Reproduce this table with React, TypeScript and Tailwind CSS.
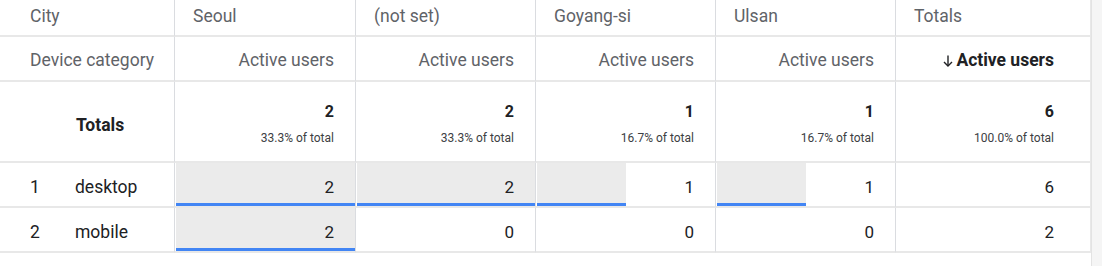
const cities = ["Seoul", "(not set)", "Goyang-si", "Ulsan"];

const totals = [
  { value: 2, pct: "33.3% of total" },
  { value: 2, pct: "33.3% of total" },
  { value: 1, pct: "16.7% of total" },
  { value: 1, pct: "16.7% of total" },
];

const rows = [
  { rank: 1, device: "desktop", values: [2, 2, 1, 1], total: 6 },
  { rank: 2, device: "mobile", values: [2, 0, 0, 0], total: 2 },
];

const max = 2;

const colW = ["w-[181px]", "w-[180px]", "w-[180px]", "w-[180px]"];

function Cell({ className = "", children }: { className?: string; children?: React.ReactNode }) {
  return (
    <div className={`border-r border-b-2 border-r-[#dadce0] border-b-[#e8e8e8] ${className}`}>
      {children}
    </div>
  );
}

function BarCell({ value, width }: { value: number; width: string }) {
  const pct = (value / max) * 100;
  return (
    <Cell className={`${width} relative h-[45px]`}>
      {value > 0 && (
        <div
          className="absolute left-px top-0 bottom-0 bg-[#ebebeb] border-b-[3px] border-[#4285f4]"
          style={{ width: `calc(${pct}% - 1px)` }}
        />
      )}
      <div className="relative flex h-full items-center justify-end pr-[21px] pt-[6px] text-[17px] text-[#202124]">
        {value}
      </div>
    </Cell>
  );
}

function SortArrow() {
  return (
    <svg width="10" height="12" viewBox="0 0 10 12" className="mr-[3px]" fill="none" stroke="#202124" strokeWidth="1.4">
      <path d="M5 0.5v10.5" />
      <path d="M1 7l4 4 4-4" />
    </svg>
  );
}

export default function App() {
  return (
    <div className="flex w-[1102px] h-[266px] bg-white font-['Roboto',sans-serif]">
      <div className="w-[1091px]">
        {/* city header */}
        <div className="flex">
          <Cell className="w-[175px] h-[37px] flex items-center pl-[30px] pb-[3px] text-[17.5px] text-[#5f6368]">City</Cell>
          {cities.map((c, i) => (
            <Cell key={c} className={`${colW[i]} h-[37px] flex items-center pl-[18px] pb-[3px] text-[17.5px] text-[#5f6368]`}>
              {c}
            </Cell>
          ))}
          <Cell className="w-[195px] h-[37px] flex items-center pl-[18px] pb-[3px] text-[17.5px] text-[#5f6368] border-r-[#e8e8e8]">Totals</Cell>
        </div>

        {/* metric header */}
        <div className="flex">
          <Cell className="w-[175px] h-[45px] flex items-center pl-[30px] pt-[4px] text-[17.5px] text-[#5f6368]">Device category</Cell>
          {cities.map((c, i) => (
            <Cell key={c} className={`${colW[i]} h-[45px] flex items-center justify-end pr-[21px] pt-[4px] text-[17.5px] text-[#5f6368]`}>
              Active users
            </Cell>
          ))}
          <Cell className="w-[195px] h-[45px] flex items-center justify-end pr-[36px] pt-[4px] text-[17.5px] font-bold text-[#202124] border-r-[#e8e8e8]">
            <SortArrow />Active users
          </Cell>
        </div>

        {/* totals */}
        <div className="flex">
          <Cell className="w-[175px] h-[81px] flex items-center pl-[76px] pt-[7px] text-[17.5px] font-bold text-[#202124]">Totals</Cell>
          {totals.map((t, i) => (
            <Cell key={i} className={`${colW[i]} h-[81px] flex flex-col items-end justify-center pr-[21px] pt-[5px]`}>
              <span className="text-[16px] font-bold leading-[18px] text-[#202124]">{t.value}</span>
              <span className="mt-[10px] text-[12px] leading-[14px] text-[#3c4043]">{t.pct}</span>
            </Cell>
          ))}
          <Cell className="w-[195px] h-[81px] flex flex-col items-end justify-center pr-[36px] pt-[5px] border-r-[#e8e8e8]">
            <span className="text-[16px] font-bold leading-[18px] text-[#202124]">6</span>
            <span className="mt-[10px] text-[12px] leading-[14px] text-[#3c4043]">100.0% of total</span>
          </Cell>
        </div>

        {rows.map((r) => (
          <div key={r.device} className="flex">
            <Cell className="w-[175px] h-[45px] flex items-center pt-[6px] text-[17.5px] text-[#202124]">
              <span className="w-[75px] pl-[30px]">{r.rank}</span>
              <span>{r.device}</span>
            </Cell>
            {r.values.map((v, i) => (
              <BarCell key={i} value={v} width={colW[i]} />
            ))}
            <Cell className="w-[195px] h-[45px] flex items-center justify-end pr-[36px] pt-[6px] text-[17px] text-[#202124] border-r-[#e8e8e8]">
              {r.total}
            </Cell>
          </div>
        ))}
      </div>
      <div className="w-[11px] border-l border-[#e3e3e3] bg-[#f5f5f5]" />
    </div>
  );
}
